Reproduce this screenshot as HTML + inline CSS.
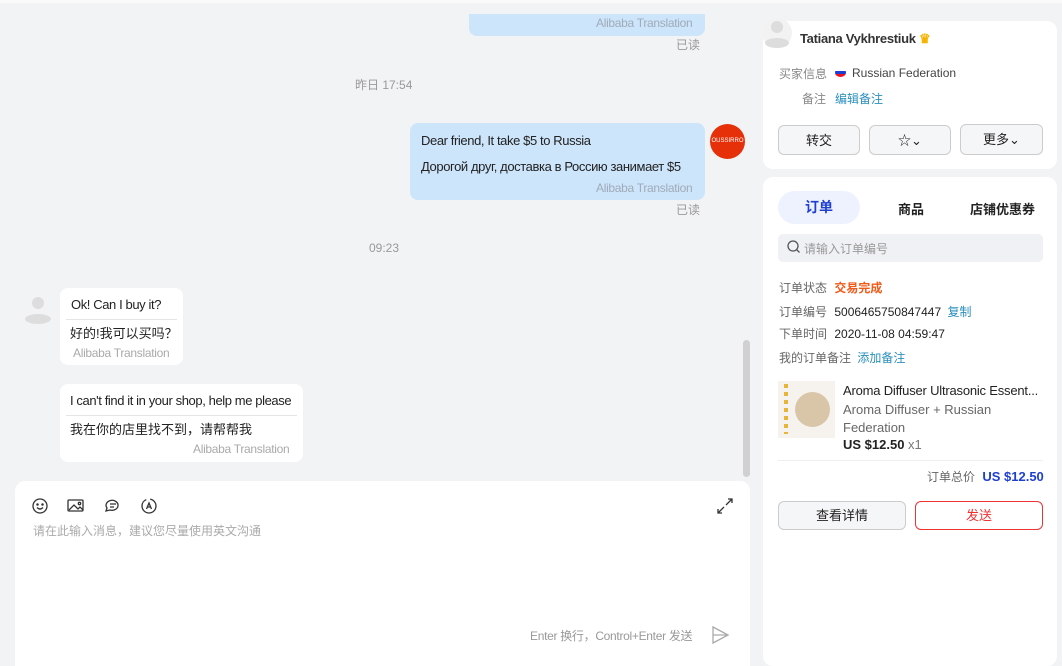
<!DOCTYPE html>
<html><head><meta charset="utf-8"><style>
*{margin:0;padding:0;box-sizing:border-box}
body{width:1062px;height:666px;background:#f2f3f5;font-family:"Liberation Sans","Noto Sans CJK SC",sans-serif;position:relative;overflow:hidden;color:#222}
.a{position:absolute}
.bub{position:absolute;border-radius:8px}
.g{color:#999}
.t{font-size:12px;white-space:nowrap}
.m{font-size:13px;letter-spacing:-0.4px;white-space:nowrap}
.card{position:absolute;background:#fff;border-radius:10px}
.btn{position:absolute;border:1px solid #ccc;border-radius:6px;background:#f5f6f7;font-size:13px;text-align:center;line-height:29px}
</style></head><body>
<div class="a" style="left:0;top:0;width:1062px;height:3px;background:#fafafa"></div>

<div class="bub" style="left:469px;top:14px;width:236px;height:22px;background:#cce5fb;border-radius:0 0 8px 8px"></div>
<div class="a t" style="left:596px;top:16px;color:#a0abb8;letter-spacing:-0.3px">Alibaba Translation</div>
<div class="a t g" style="left:676px;top:36px">已读</div>

<div class="a t g" style="left:355px;top:76px">昨日 17:54</div>

<div class="bub" style="left:410px;top:123px;width:295px;height:77px;background:#cce5fb"></div>
<div class="a m" style="left:421px;top:133px">Dear friend, It take $5 to Russia</div>
<div class="a m" style="left:421px;top:159px">Дорогой друг, доставка в Россию занимает $5</div>
<div class="a t" style="left:596px;top:181px;color:#a0abb8;letter-spacing:-0.3px">Alibaba Translation</div>
<div class="a t g" style="left:676px;top:201px">已读</div>
<div class="a" style="left:710px;top:124px;width:35px;height:35px;border-radius:50%;background:#e53009;color:#fff;font-size:6px;line-height:35px;text-align:center;overflow:hidden">OUSSIRRO</div>

<div class="a t g" style="left:369px;top:241px">09:23</div>

<svg class="a" style="left:24px;top:295px" width="28" height="30" viewBox="0 0 28 30"><circle cx="14" cy="8" r="6" fill="#ddd"/><ellipse cx="14" cy="24" rx="13" ry="5" fill="#ddd"/></svg>
<div class="bub" style="left:60px;top:288px;width:123px;height:77px;background:#fff"></div>
<div class="a m" style="left:71px;top:297px">Ok! Can I buy it?</div>
<div class="a" style="left:66px;top:319px;width:111px;height:1px;background:#e5e5e5"></div>
<div class="a" style="left:70px;top:323px;font-size:13px">好的!我可以买吗？</div>
<div class="a t" style="left:73px;top:346px;color:#aaa;letter-spacing:-0.3px">Alibaba Translation</div>

<div class="bub" style="left:60px;top:384px;width:243px;height:78px;background:#fff"></div>
<div class="a m" style="left:70px;top:393px">I can't find it in your shop, help me please</div>
<div class="a" style="left:66px;top:415px;width:231px;height:1px;background:#e5e5e5"></div>
<div class="a" style="left:70px;top:419px;font-size:13px">我在你的店里找不到，请帮帮我</div>
<div class="a t" style="left:193px;top:442px;color:#aaa;letter-spacing:-0.3px">Alibaba Translation</div>

<div class="a" style="left:743px;top:340px;width:7px;height:137px;border-radius:4px;background:#d0d0d0"></div>

<div class="a" style="left:15px;top:481px;width:735px;height:185px;background:#fff;border-radius:10px 10px 0 0"></div>
<svg class="a" style="left:31px;top:497px" width="130" height="18" viewBox="0 0 130 18" fill="none" stroke="#333" stroke-width="1.3">
<circle cx="9" cy="9" r="7"/><circle cx="6.5" cy="7.5" r=".6"/><circle cx="11.5" cy="7.5" r=".6"/><path d="M6 10.5q3 3 6 0"/>
<rect x="37" y="3" width="15" height="11" rx="1"/><path d="M38 13l5-5 4 4 2-2 3 3"/><circle cx="48.5" cy="6.5" r="1.2"/>
<path d="M75 14l1-3a6 5 0 1 1 3 2z"/><path d="M79 7h6M79 10h4"/>
<circle cx="118" cy="9" r="7" stroke-dasharray="30 4"/><path d="M115.5 12l2.5-6 2.5 6M116.3 10h3.4"/>
</svg>
<div class="a" style="left:33px;top:522px;font-size:12px;color:#aaa">请在此输入消息，建议您尽量使用英文沟通</div>
<svg class="a" style="left:716px;top:497px" width="18" height="18" viewBox="0 0 18 18" fill="none" stroke="#333" stroke-width="1.3"><path d="M10 8l6-6M12 2h4v4M8 10l-6 6M2 12v4h4"/></svg>
<div class="a" style="left:530px;top:627px;font-size:12px;color:#999;letter-spacing:-0.3px">Enter 换行，Control+Enter 发送</div>
<svg class="a" style="left:710px;top:625px" width="20" height="20" viewBox="0 0 20 20" fill="none" stroke="#aaa" stroke-width="1.3"><path d="M3 2l15 8-15 8zM3 10h15"/></svg>

<div class="card" style="left:763px;top:21px;width:294px;height:148px"></div>
<svg class="a" style="left:762px;top:18px" width="30" height="30" viewBox="0 0 30 30"><circle cx="15" cy="15" r="15" fill="#f2f2f2"/><circle cx="15" cy="9" r="6" fill="#ddd"/><ellipse cx="15" cy="25" rx="12" ry="5" fill="#ddd"/></svg>
<div class="a" style="left:800px;top:31px;font-size:13px;font-weight:bold;color:#333;letter-spacing:-0.3px">Tatiana Vykhrestiuk <span style="color:#f5b400">♛</span></div>
<div class="a t" style="left:779px;top:65px;color:#888">买家信息</div>
<div class="a" style="left:835px;top:68px;width:11px;height:9px;border-radius:50%;background:linear-gradient(#fff 33%,#1a3fd1 33% 66%,#e12 66%)"></div>
<div class="a t" style="left:852px;top:66px;color:#444">Russian Federation</div>
<div class="a t" style="left:802px;top:90px;color:#888">备注</div>
<div class="a t" style="left:835px;top:90px;color:#2a8fbd">编辑备注</div>
<div class="btn" style="left:778px;top:125px;width:82px;height:30px">转交</div>
<div class="btn" style="left:869px;top:125px;width:82px;height:30px">☆⌄</div>
<div class="btn" style="left:960px;top:124px;width:83px;height:31px">更多⌄</div>

<div class="card" style="left:763px;top:177px;width:294px;height:489px"></div>
<div class="a" style="left:778px;top:191px;width:82px;height:33px;border-radius:17px;background:#eef2fe;color:#1f3fd0;font-size:14px;font-weight:bold;text-align:center;line-height:33px">订单</div>
<div class="a" style="left:898px;top:199px;font-size:13px;font-weight:bold">商品</div>
<div class="a" style="left:970px;top:199px;font-size:13px;font-weight:bold">店铺优惠券</div>
<div class="a" style="left:778px;top:234px;width:265px;height:28px;border-radius:5px;background:#f0f1f5"></div>
<svg class="a" style="left:787px;top:240px" width="14" height="14" viewBox="0 0 14 14" fill="none" stroke="#555" stroke-width="1.3"><circle cx="6" cy="6" r="5"/><path d="M9.5 9.5l3 3"/></svg>
<div class="a t" style="left:804px;top:240px;color:#999">请输入订单编号</div>

<div class="a t" style="left:779px;top:279px;color:#666">订单状态 <span style="color:#f05a1a;font-weight:bold;margin-left:4px">交易完成</span></div>
<div class="a t" style="left:779px;top:303px;color:#666">订单编号 <span style="color:#222;margin-left:4px">5006465750847447</span> <span style="color:#2a8fbd;margin-left:3px">复制</span></div>
<div class="a t" style="left:779px;top:325px;color:#666">下单时间 <span style="color:#222;margin-left:4px">2020-11-08 04:59:47</span></div>
<div class="a t" style="left:779px;top:349px;color:#666">我的订单备注 <span style="color:#2a8fbd;margin-left:3px">添加备注</span></div>

<div class="a" style="left:778px;top:381px;width:57px;height:57px;background:#f6f3ef"></div>
<div class="a" style="left:795px;top:392px;width:35px;height:35px;border-radius:50%;background:#d9c6a8"></div>
<div class="a" style="left:784px;top:384px;width:4px;height:50px;background:repeating-linear-gradient(#e8b43a 0 4px,transparent 4px 8px)"></div>
<div class="a" style="left:843px;top:383px;font-size:13px;white-space:nowrap;letter-spacing:-0.2px">Aroma Diffuser Ultrasonic Essent...</div>
<div class="a" style="left:843px;top:401px;font-size:13px;color:#666;line-height:18px;width:180px">Aroma Diffuser + Russian Federation</div>
<div class="a" style="left:843px;top:437px;font-size:13px;font-weight:bold">US $12.50 <span style="font-weight:normal;color:#777">x1</span></div>
<div class="a" style="left:778px;top:460px;width:265px;height:1px;background:#eee"></div>
<div class="a t" style="left:927px;top:468px;color:#666">订单总价 <span style="color:#1f3fd0;font-weight:bold;font-size:13px;margin-left:4px">US $12.50</span></div>
<div class="btn" style="left:778px;top:501px;width:128px;height:29px;line-height:27px">查看详情</div>
<div class="btn" style="left:915px;top:501px;width:128px;height:29px;line-height:27px;background:#fff;border-color:#e33;color:#e33">发送</div>
</body></html>
